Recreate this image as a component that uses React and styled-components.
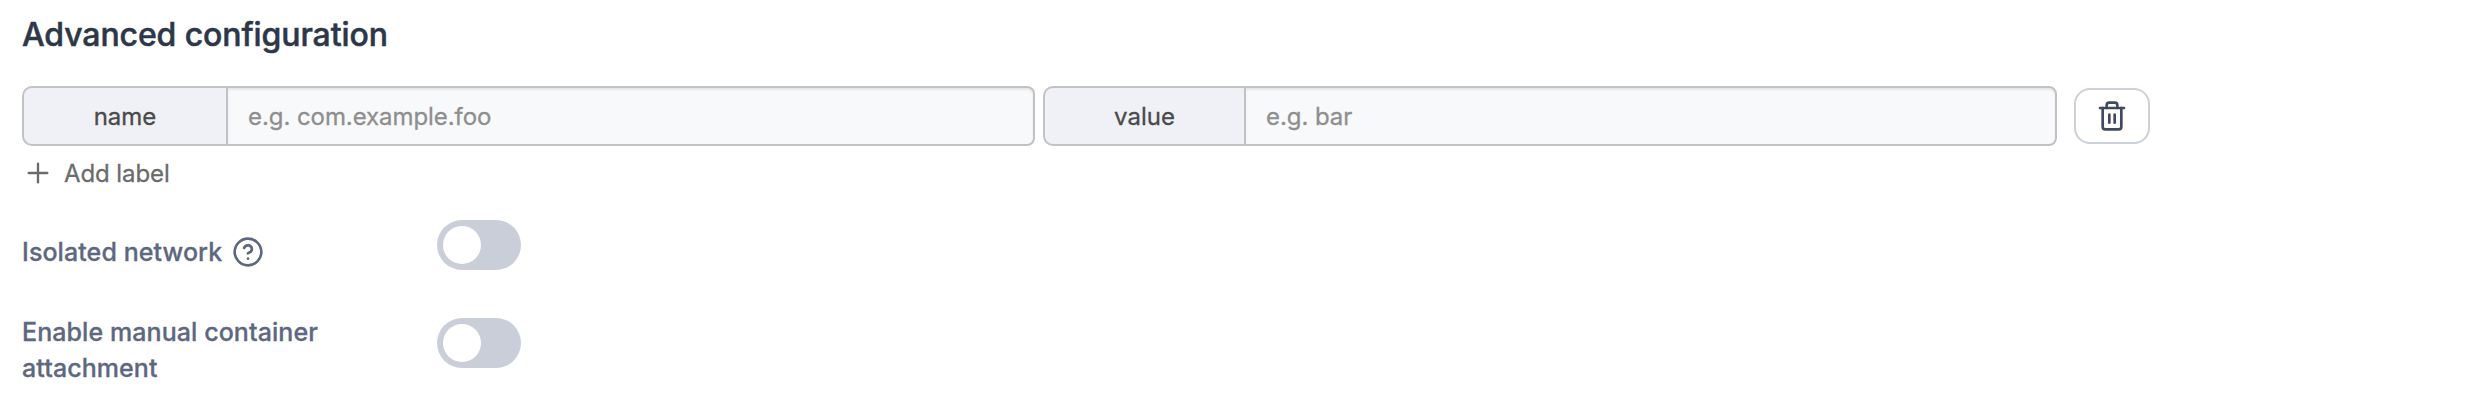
import React from 'react';
import styled, { createGlobalStyle } from 'styled-components';
import { CircleHelp, Plus, Trash2 } from 'lucide-react';

const GlobalStyle = createGlobalStyle`
  *, *::before, *::after { box-sizing: border-box; }
  body { margin: 0; background: #fff; font-family: Inter, "Liberation Sans", sans-serif; }
`;

const Form = styled.main`
  height: 420px;
  padding: 15px 22px 0;
  font-size: 24px;
  line-height: 36px;
  -webkit-text-stroke-width: 0.3px;
`;

const Title = styled.h2`
  margin: 0 0 31px;
  font-size: 32px;
  font-weight: 500;
  line-height: 40px;
  letter-spacing: -0.1px;
  color: #2d3748;
  -webkit-text-stroke: 0.5px #2d3748;
`;

const LabelRow = styled.div`
  display: flex;
  align-items: center;
`;

const InputGroup = styled.label`
  display: flex;
  width: ${(p) => p.$width}px;
  height: 60px;
  margin-right: ${(p) => p.$gap}px;
`;

const Addon = styled.span`
  display: flex;
  flex: none;
  align-items: center;
  justify-content: center;
  width: ${(p) => p.$width}px;
  padding-top: 1px;
  border: 2px solid #c2c2c2;
  border-right: 0;
  border-radius: 10px 0 0 10px;
  background: #f0f1f6;
  color: #4a4a4a;
`;

const Input = styled.input`
  flex: 1;
  min-width: 0;
  padding: 1px 20px 0;
  border: 2px solid #c2c2c2;
  border-radius: 0 8px 8px 0;
  outline: none;
  background: #f8f9fb;
  box-shadow: inset 0 2px 2px rgba(0, 0, 0, 0.075);
  font: inherit;
  letter-spacing: -0.07px;

  &::placeholder {
    color: #8e8e8e;
    opacity: 1;
    -webkit-text-stroke: 0.3px #8e8e8e;
  }
`;

const RemoveButton = styled.button`
  display: flex;
  align-items: center;
  justify-content: center;
  width: 76px;
  height: 56px;
  padding: 0;
  border: 2px solid #cbd0dc;
  border-radius: 16px;
  background: #fff;
  color: #3f4a5f;
`;

const AddButton = styled.button`
  display: flex;
  align-items: center;
  gap: 10px;
  height: 36px;
  margin: 9px 0 0;
  padding: 0;
  border: 0;
  background: none;
  color: #6b6b6b;
  font: inherit;
  letter-spacing: -0.1px;
`;

const AddText = styled.span`
  padding-top: 2px;
`;

const Field = styled.div`
  display: flex;
  align-items: flex-start;
  margin-top: ${(p) => p.$top}px;
`;

const FieldLabel = styled.span`
  display: flex;
  align-items: center;
  gap: 10px;
  width: 415px;
  padding: ${(p) => p.$offset}px 80px 0 0;
  font-size: 25px;
  font-weight: 500;
  letter-spacing: 0.08px;
  color: #5d6880;
`;

const Switch = styled.button`
  width: 84px;
  height: 50px;
  margin-top: ${(p) => p.$offset}px;
  padding: 6px;
  border: 0;
  border-radius: 25px;
  background: #c9ced8;
`;

const Knob = styled.span`
  display: block;
  width: 38px;
  height: 38px;
  border-radius: 50%;
  background: #fff;
`;

const Toggle = ({ label, offset = 0 }) => (
  <Switch type="button" role="switch" aria-checked="false" aria-label={label} $offset={offset}>
    <Knob />
  </Switch>
);

export default function App() {
  return (
    <>
      <GlobalStyle />
      <Form>
        <Title>Advanced configuration</Title>
        <LabelRow>
          <InputGroup $width={1013} $gap={8}>
            <Addon $width={204}>name</Addon>
            <Input placeholder="e.g. com.example.foo" />
          </InputGroup>
          <InputGroup $width={1014} $gap={17}>
            <Addon $width={201}>value</Addon>
            <Input placeholder="e.g. bar" />
          </InputGroup>
          <RemoveButton type="button" aria-label="Remove label">
            <Trash2 size={32} />
          </RemoveButton>
        </LabelRow>
        <AddButton type="button">
          <Plus size={32} strokeWidth={1.75} />
          <AddText>Add label</AddText>
        </AddButton>
        <Field $top={29}>
          <FieldLabel $offset={14}>
            Isolated network
            <CircleHelp size={32} />
          </FieldLabel>
          <Toggle label="Isolated network" />
        </Field>
        <Field $top={44}>
          <FieldLabel $offset={0}>Enable manual container attachment</FieldLabel>
          <Toggle label="Enable manual container attachment" offset={4} />
        </Field>
      </Form>
    </>
  );
}
